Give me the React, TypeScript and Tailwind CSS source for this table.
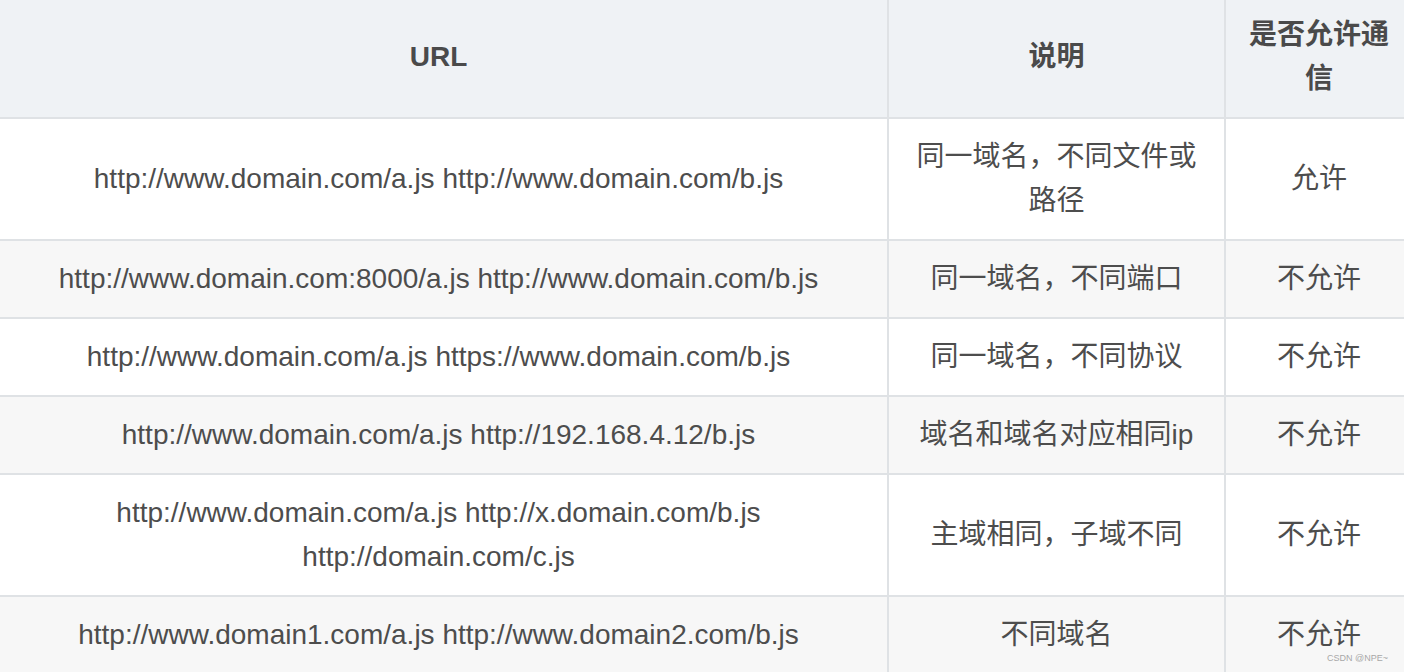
const rows: [string, string, string][] = [
  ["http://www.domain.com/a.js http://www.domain.com/b.js", "同一域名，不同文件或路径", "允许"],
  ["http://www.domain.com:8000/a.js http://www.domain.com/b.js", "同一域名，不同端口", "不允许"],
  ["http://www.domain.com/a.js https://www.domain.com/b.js", "同一域名，不同协议", "不允许"],
  ["http://www.domain.com/a.js http://192.168.4.12/b.js", "域名和域名对应相同ip", "不允许"],
  ["http://www.domain.com/a.js http://x.domain.com/b.js http://domain.com/c.js", "主域相同，子域不同", "不允许"],
  ["http://www.domain1.com/a.js http://www.domain2.com/b.js", "不同域名", "不允许"],
];

function Cell({ children, last, head }: { children: React.ReactNode; last?: boolean; head?: boolean }) {
  return (
    <div
      className={
        "flex items-center justify-center px-5 py-4 text-center border-b-2 border-[#dfe2e5] " +
        (last ? "" : "border-r-2 ") +
        (head ? "font-bold text-[#4a4a4a]" : "text-[#4d4d4d]")
      }
    >
      <span>{children}</span>
    </div>
  );
}

export default function App() {
  return (
    <div className="relative h-[672px] w-[1404px] overflow-hidden bg-white">
      <div
        className="-ml-[10px] -mt-[3px] grid w-[1422px] grid-cols-[899px_337px_186px] text-[28px] leading-[44px]"
        style={{ fontFamily: '"Liberation Sans", "Noto Sans CJK SC", sans-serif' }}
      >
        <div className="contents [&>div]:bg-[#eff2f5]">
          <Cell head>URL</Cell>
          <Cell head>说明</Cell>
          <Cell head last>是否允许通信</Cell>
        </div>
        {rows.map(([url, desc, ok], i) => (
          <div key={i} className={"contents " + (i % 2 === 1 ? "[&>div]:bg-[#f7f7f7]" : "[&>div]:bg-white")}>
            <Cell>{url}</Cell>
            <Cell>{desc}</Cell>
            <Cell last>{ok}</Cell>
          </div>
        ))}
      </div>
      <div
        className="absolute right-[16px] bottom-[9px] text-[9px] leading-none text-[#a8a8a8]"
        style={{ fontFamily: '"Liberation Sans", sans-serif' }}
      >
        CSDN @NPE~
      </div>
    </div>
  );
}
